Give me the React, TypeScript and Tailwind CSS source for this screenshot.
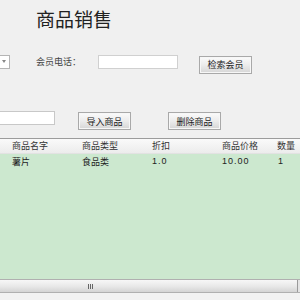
import React from 'react'

type row = {
    name: string;
    kind: string;
    discount: string;
    price: string;
    count: string;
}

const rows: row[] = [
    { name: '薯片', kind: '食品类', discount: '1.0', price: '10.00', count: '1' },
]

const cols = ['w-[70px]', 'w-[70px]', 'w-[70px]', 'w-[55px]', 'flex-1']

const Btn = ({ label }: { label: string }) => (
    <button className="h-[18px] w-[53px] border border-[#a9a9a9] bg-gradient-to-b from-[#fbfbfb] via-[#ececec] to-[#d6d6d6] text-[9px] leading-none text-[#1a1a1a] shadow-[inset_0_0_0_1px_#f7f7f7]">
        {label}
    </button>
)

const App = () => {
    return (
        <div className="w-[300px] h-[300px] overflow-hidden bg-[#f0f0f0] font-['Noto_Sans_CJK_SC',sans-serif] text-[#333] flex flex-col">
            <h1 className="h-[53px] pl-[36px] pt-[7px] text-[19px] leading-[24px] text-[#222] font-normal">商品销售</h1>

            {/* member row */}
            <div className="h-[17px] flex items-center">
                <div className="w-[10px] h-[14px] bg-white border border-l-0 border-[#b5b5b5] flex items-center justify-center">
                    <span className="block w-0 h-0 border-x-[2.5px] border-x-transparent border-t-[3px] border-t-[#888] ml-[-2px]"></span>
                </div>
                <span className="ml-[26px] text-[9px] text-[#444] whitespace-nowrap">会员电话：</span>
                <input className="ml-[17px] w-[80px] h-[14px] bg-white border border-[#d0d0d0] outline-none" />
                <div className="ml-[21px]"><Btn label="检索会员" /></div>
            </div>

            {/* goods row */}
            <div className="mt-[39px] h-[18px] flex items-center">
                <input className="w-[55px] h-[14px] bg-white border border-l-0 border-[#c8c8c8] outline-none" />
                <div className="ml-[23px]"><Btn label="导入商品" /></div>
                <div className="ml-[37px]"><Btn label="删除商品" /></div>
            </div>

            {/* table */}
            <div className="mt-[11px] flex flex-col border-t border-[#9c9c9c]">
                <div className="h-[15px] flex items-center bg-gradient-to-b from-[#fafafa] to-[#ececec] border-b border-[#e2e2e2] text-[9px] text-[#333]">
                    {['商品名字', '商品类型', '折扣', '商品价格', '数量'].map((h, i) => (
                        <div key={h} className={`${cols[i]} pl-[12px] whitespace-nowrap`}>{h}</div>
                    ))}
                </div>
                <div className="h-[125px] bg-[#cce8cf]">
                    {rows.map((r) => (
                        <div key={r.name} className="h-[16px] flex items-center text-[9px] text-[#222]">
                            <div className={`${cols[0]} pl-[12px]`}>{r.name}</div>
                            <div className={`${cols[1]} pl-[12px]`}>{r.kind}</div>
                            <div className={`${cols[2]} pl-[12px] font-['Liberation_Sans',sans-serif] tracking-[1px]`}>{r.discount}</div>
                            <div className={`${cols[3]} pl-[12px] font-['Liberation_Sans',sans-serif] tracking-[1px]`}>{r.price}</div>
                            <div className={`${cols[4]} pl-[13px] font-['Liberation_Sans',sans-serif]`}>{r.count}</div>
                        </div>
                    ))}
                </div>
                {/* horizontal scrollbar */}
                <div className="h-[14px] border-y border-[#b0b0b0] bg-[#e4e4e4] flex">
                    <div className="w-[298px] h-full border-r border-[#9a9a9a] bg-gradient-to-b from-[#f7f7f7] via-[#e9e9e9] to-[#d4d4d4] flex items-center">
                        <div className="ml-[88px] flex gap-[1px]">
                            <span className="block w-[1px] h-[5px] bg-[#666]"></span>
                            <span className="block w-[1px] h-[5px] bg-[#666]"></span>
                            <span className="block w-[1px] h-[5px] bg-[#666]"></span>
                        </div>
                    </div>
                </div>
            </div>
            <div className="flex-1 bg-[#f2f2f2]"></div>
        </div>
    )
}

export default App
